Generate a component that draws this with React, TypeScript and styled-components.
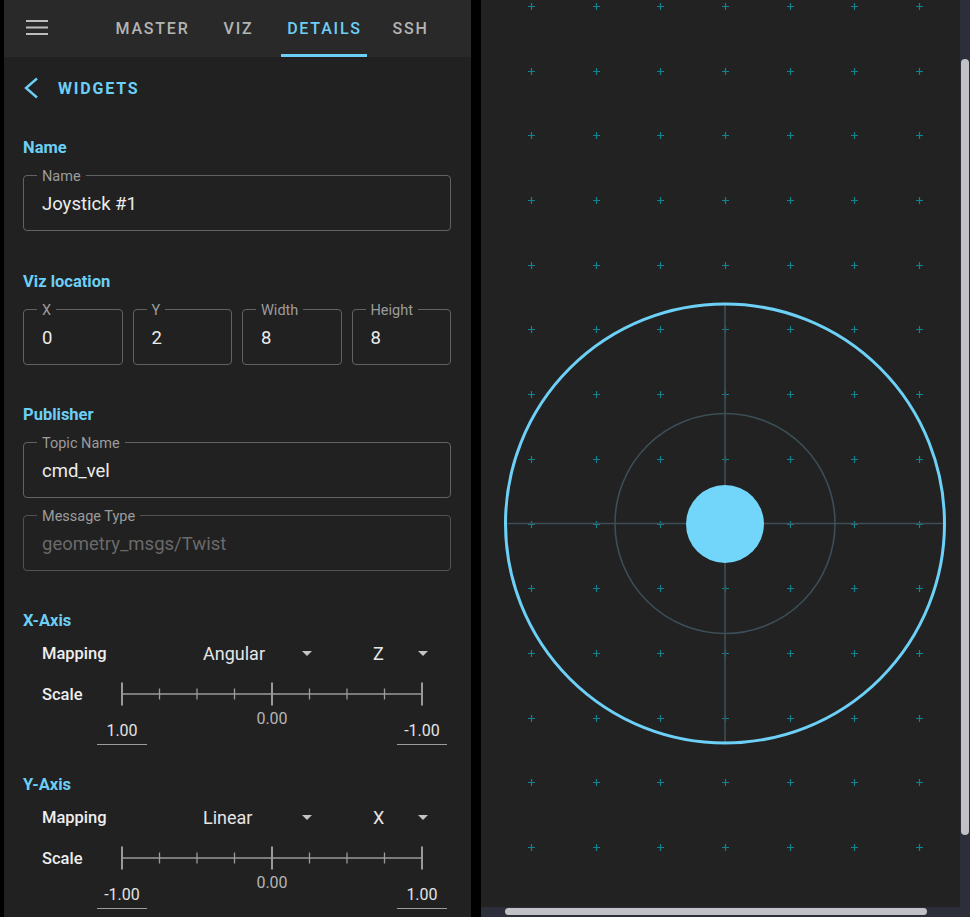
import React from "react";
import styled, { createGlobalStyle } from "styled-components";

const ACCENT = "#6ccff6";

const GlobalStyle = createGlobalStyle`
  html, body { margin: 0; padding: 0; background: #000; }
  body { font-family: Roboto, "Noto Sans", "Liberation Sans", sans-serif; }
  * { box-sizing: border-box; }
`;

const Page = styled.div`
  display: flex;
  gap: 10px;
  width: 970px;
  height: 917px;
  padding-left: 4px;
  background: #000;
  overflow: hidden;
`;

const LeftPanel = styled.div`
  width: 467px;
  height: 100%;
  flex-shrink: 0;
  background: #212121;
  display: flex;
  flex-direction: column;
  overflow: hidden;
`;

const TopBar = styled.header`
  height: 57px;
  flex-shrink: 0;
  background: #292929;
  display: flex;
  align-items: stretch;
  padding-left: 22px;
`;

const MenuButton = styled.div`
  width: 22px;
  margin-right: 61px;
  display: flex;
  align-items: center;
  padding-bottom: 2px;
`;

const Tabs = styled.nav`
  display: flex;
`;

const Tab = styled.div<{ $active?: boolean }>`
  width: 86px;
  height: 57px;
  display: flex;
  align-items: center;
  justify-content: center;
  padding: 3px 0 0 1px;
  font-size: 16px;
  font-weight: 500;
  letter-spacing: 1.8px;
  color: ${(p) => (p.$active ? ACCENT : "#b4b4b4")};
  border-bottom: 3px solid ${(p) => (p.$active ? ACCENT : "transparent")};
`;

const Content = styled.div`
  display: flex;
  flex-direction: column;
  padding: 0 20px 0 19px;
`;

const BackRow = styled.div`
  height: 62px;
  display: flex;
  align-items: center;
`;

const BackIcon = styled.svg`
  width: 16px;
  height: 22px;
  margin-right: 19px;
  flex-shrink: 0;
`;

const BackTitle = styled.span`
  font-size: 16px;
  font-weight: 700;
  letter-spacing: 1.8px;
  color: ${ACCENT};
`;

const SectionTitle = styled.h3<{ $mt: number }>`
  margin: ${(p) => p.$mt}px 0 0;
  font-size: 16.5px;
  font-weight: 700;
  line-height: 20px;
  color: ${ACCENT};
`;

const Field = styled.fieldset<{ $mt?: number; $disabled?: boolean }>`
  margin: ${(p) => p.$mt ?? 8}px 0 0;
  padding: 0 13px 14px;
  min-width: 0;
  border: 1px solid ${(p) => (p.$disabled ? "#525252" : "#626262")};
  border-radius: 4px;
`;

const Legend = styled.legend`
  padding: 4px 5px 0;
  font-size: 14.5px;
  line-height: 14px;
  color: #9c9c9c;
`;

const Value = styled.div<{ $disabled?: boolean }>`
  margin-top: 8px;
  padding-left: 5px;
  font-size: 18.5px;
  line-height: 24px;
  color: ${(p) => (p.$disabled ? "#6a6a6a" : "#ececec")};
  white-space: nowrap;
`;

const FieldGrid = styled.div`
  display: grid;
  grid-template-columns: repeat(4, 1fr);
  gap: 10px;
  margin-top: 8px;
  & > fieldset {
    margin-top: 0;
  }
`;

const AxisRow = styled.div<{ $mt: number }>`
  display: flex;
  align-items: center;
  height: 24px;
  margin-top: ${(p) => p.$mt}px;
  padding-left: 19px;
`;

const RowLabel = styled.span<{ $w: number }>`
  width: ${(p) => p.$w}px;
  flex-shrink: 0;
  font-size: 16.5px;
  font-weight: 500;
  color: #eeeeee;
`;

const Select = styled.div<{ $w: number; $ml?: number }>`
  width: ${(p) => p.$w}px;
  margin-left: ${(p) => p.$ml ?? 0}px;
  display: flex;
  align-items: center;
  justify-content: space-between;
  font-size: 18px;
  color: #e6e6e6;
`;

const Caret = styled.svg`
  width: 10px;
  height: 5px;
  margin-right: 7px;
`;

const Ruler = styled.svg`
  width: 302px;
  height: 24px;
  display: block;
`;

const ScaleLabels = styled.div`
  display: flex;
  justify-content: space-between;
  align-items: flex-start;
  width: 350px;
  margin-left: 74px;
`;

const ScaleInput = styled.div`
  width: 50px;
  margin-top: 16px;
  padding-bottom: 4px;
  border-bottom: 1px solid #9c9c9c;
  text-align: center;
  font-size: 16px;
  line-height: 18px;
  color: #e4e4e4;
`;

const MidLabel = styled.div`
  margin-top: 4px;
  font-size: 16px;
  line-height: 18px;
  color: #b5b5b5;
`;

const RightArea = styled.div`
  width: 489px;
  height: 917px;
  flex-shrink: 0;
  display: flex;
  flex-direction: column;
`;

const ViewRow = styled.div`
  height: 907px;
  display: flex;
`;

const Canvas = styled.div`
  flex: 1;
  background: #222222;
  overflow: hidden;
`;

const VTrack = styled.div`
  width: 10px;
  background: #2c2e3a;
  padding: 59px 1px 0 1px;
`;

const VThumb = styled.div`
  width: 8px;
  height: 776px;
  border-radius: 4px;
  background: #c2c2c6;
`;

const HTrack = styled.div`
  height: 10px;
  background: #2c2e3a;
  padding: 1px 0 0 24px;
`;

const HThumb = styled.div`
  width: 422px;
  height: 7px;
  border-radius: 4px;
  background: #c2c2c6;
`;

const CaretIcon = () => (
  <Caret viewBox="0 0 10 5">
    <path d="M0 0h10L5 5z" fill="#c4c4c4" />
  </Caret>
);

const RulerIcon = () => {
  const small = [1, 2, 3, 5, 6, 7].map((k) => 1 + k * 37.5);
  return (
    <Ruler viewBox="0 0 302 24">
      <line x1="1" y1="12" x2="301" y2="12" stroke="#9a9a9a" strokeWidth="1.6" />
      {[1, 151, 301].map((x) => (
        <line key={x} x1={x} y1="0.5" x2={x} y2="23.5" stroke="#9a9a9a" strokeWidth="2" />
      ))}
      {small.map((x) => (
        <line key={x} x1={x} y1="6.5" x2={x} y2="17.5" stroke="#9a9a9a" strokeWidth="1.3" />
      ))}
    </Ruler>
  );
};

type AxisProps = {
  title: string;
  mapping: string;
  component: string;
  left: string;
  right: string;
  mt: number;
};

const AxisSection = ({ title, mapping, component, left, right, mt }: AxisProps) => (
  <>
    <SectionTitle $mt={mt}>{title}</SectionTitle>
    <AxisRow $mt={10}>
      <RowLabel $w={161}>Mapping</RowLabel>
      <Select $w={116}>
        <span>{mapping}</span>
        <CaretIcon />
      </Select>
      <Select $w={62} $ml={54}>
        <span>{component}</span>
        <CaretIcon />
      </Select>
    </AxisRow>
    <AxisRow $mt={17}>
      <RowLabel $w={79}>Scale</RowLabel>
      <RulerIcon />
    </AxisRow>
    <ScaleLabels>
      <ScaleInput>{left}</ScaleInput>
      <MidLabel>0.00</MidLabel>
      <ScaleInput>{right}</ScaleInput>
    </ScaleLabels>
  </>
);

const GRID = 64.7;
const CX = 244;
const CY = 523.5;

const JoystickCanvas = () => {
  const xs = [-3, -2, -1, 0, 1, 2, 3].map((k) => Math.round(CX + k * GRID) + 0.5);
  const ys = [-8, -7, -6, -5, -4, -3, -2, -1, 0, 1, 2, 3, 4, 5].map(
    (k) => Math.round(CY + k * GRID) + 0.5
  );
  const crossPath = xs
    .flatMap((x) => ys.map((y) => `M${x - 3.5} ${y}H${x + 3.5}M${x} ${y - 3.5}V${y + 3.5}`))
    .join("");
  return (
    <svg width="479" height="907" viewBox="0 0 479 907" style={{ display: "block" }}>
      <path d={crossPath} stroke="#0f8390" strokeWidth="1.2" fill="none" />
      <line x1={CX} y1={CY - 220} x2={CX} y2={CY + 220} stroke="#3c4e57" strokeWidth="1.6" />
      <line x1={CX - 221} y1={CY} x2={CX + 221} y2={CY} stroke="#3c4e57" strokeWidth="1.6" />
      <circle cx={CX} cy={CY} r="110" fill="none" stroke="#3c4e57" strokeWidth="1.6" />
      <circle cx={CX} cy={CY} r="219.5" fill="none" stroke="#6dd0f7" strokeWidth="3" />
      <circle cx={CX} cy={CY + 0.5} r="39" fill="#72d5fa" />
    </svg>
  );
};

export default function App() {
  return (
    <>
      <GlobalStyle />
      <Page>
        <LeftPanel>
          <TopBar>
            <MenuButton>
              <svg width="22" height="16" viewBox="0 0 22 16">
                <rect x="0" y="0" width="22" height="2" fill="#bdbdbd" />
                <rect x="0" y="6.5" width="22" height="2" fill="#bdbdbd" />
                <rect x="0" y="13" width="22" height="2" fill="#bdbdbd" />
              </svg>
            </MenuButton>
            <Tabs>
              <Tab>MASTER</Tab>
              <Tab>VIZ</Tab>
              <Tab $active>DETAILS</Tab>
              <Tab>SSH</Tab>
            </Tabs>
          </TopBar>
          <Content>
            <BackRow>
              <BackIcon viewBox="0 0 16 22">
                <polyline
                  points="14,1.5 3,11 14,20.5"
                  fill="none"
                  stroke={ACCENT}
                  strokeWidth="2.4"
                />
              </BackIcon>
              <BackTitle>WIDGETS</BackTitle>
            </BackRow>

            <SectionTitle $mt={19}>Name</SectionTitle>
            <Field>
              <Legend>Name</Legend>
              <Value>Joystick #1</Value>
            </Field>

            <SectionTitle $mt={41}>Viz location</SectionTitle>
            <FieldGrid>
              <Field>
                <Legend>X</Legend>
                <Value>0</Value>
              </Field>
              <Field>
                <Legend>Y</Legend>
                <Value>2</Value>
              </Field>
              <Field>
                <Legend>Width</Legend>
                <Value>8</Value>
              </Field>
              <Field>
                <Legend>Height</Legend>
                <Value>8</Value>
              </Field>
            </FieldGrid>

            <SectionTitle $mt={40}>Publisher</SectionTitle>
            <Field>
              <Legend>Topic Name</Legend>
              <Value>cmd_vel</Value>
            </Field>
            <Field $disabled>
              <Legend>Message Type</Legend>
              <Value $disabled>geometry_msgs/Twist</Value>
            </Field>

            <AxisSection title="X-Axis" mapping="Angular" component="Z" left="1.00" right="-1.00" mt={40} />
            <AxisSection title="Y-Axis" mapping="Linear" component="X" left="-1.00" right="1.00" mt={30} />
          </Content>
        </LeftPanel>

        <RightArea>
          <ViewRow>
            <Canvas>
              <JoystickCanvas />
            </Canvas>
            <VTrack>
              <VThumb />
            </VTrack>
          </ViewRow>
          <HTrack>
            <HThumb />
          </HTrack>
        </RightArea>
      </Page>
    </>
  );
}
